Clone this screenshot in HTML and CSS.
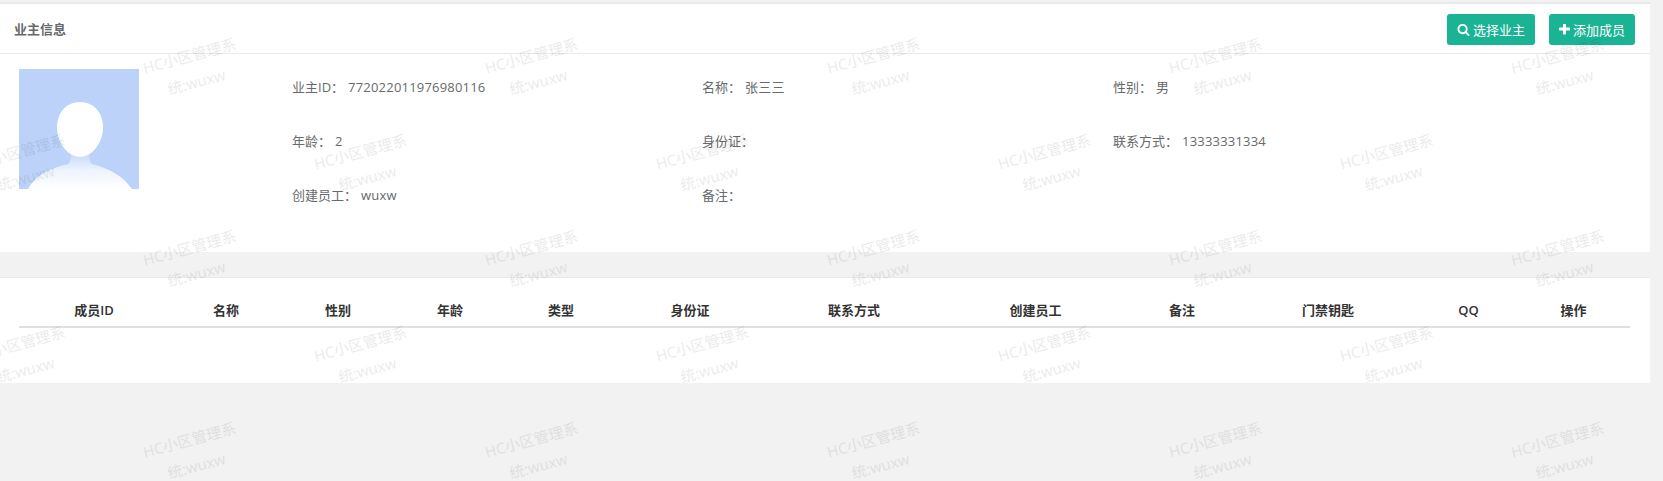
FILE: index.html
```html
<!DOCTYPE html>
<html>

<head>
    <meta charset="UTF-8">
    <title>业主成员</title>
    <link rel="stylesheet" href="styles.css">
</head>

<body>
    <div class="page">
        <div class="ibox ibox-owner">
            <div class="ibox-title">
                <h5>业主信息</h5>
                <div class="ibox-tools">
                    <button class="btn">
                        <svg class="icon" viewBox="0 0 1792 1792"><path d="M1216 832q0-185-131.500-316.500t-316.500-131.500-316.500 131.500-131.500 316.500 131.500 316.500 316.500 131.500 316.500-131.500 131.500-316.500zm512 832q0 52-38 90t-90 38q-54 0-90-38l-343-342q-179 124-399 124-143 0-273.500-55.500t-225-150-150-225-55.500-273.500 55.500-273.500 150-225 225-150 273.500-55.500 273.500 55.500 225 150 150 225 55.500 273.500q0 220-124 399l343 343q37 37 37 90z"/></svg>
                        选择业主
                    </button>
                    <button class="btn">
                        <svg class="icon icon-plus" viewBox="192 192 1408 1408"><path d="M1600 736v192q0 40-28 68t-68 28h-416v416q0 40-28 68t-68 28h-192q-40 0-68-28t-28-68v-416h-416q-40 0-68-28t-28-68v-192q0-40 28-68t68-28h416v-416q0-40 28-68t68-28h192q40 0 68 28t28 68v416h416q40 0 68 28t28 68z"/></svg>
                        添加成员
                    </button>
                </div>
            </div>
            <div class="ibox-content owner">
                <svg class="avatar" viewBox="0 0 120 120">
                    <defs>
                        <linearGradient id="bodyFade" x1="0" y1="0" x2="0" y2="1">
                            <stop offset="0" stop-color="#c4d8f9" />
                            <stop offset="0.5" stop-color="#eef4fd" />
                            <stop offset="1" stop-color="#ffffff" />
                        </linearGradient>
                    </defs>
                    <rect width="120" height="120" fill="#bcd2f8" />
                    <path d="M9 120C15 108 30 99 49 95Q52 93 52 84H70Q70 93 73 95C90 99 105 108 113 120Z" fill="url(#bodyFade)" />
                    <path d="M61 33C75 33 84 44 84 58C84 74 73 88 61 88C49 88 38 74 38 58C38 44 47 33 61 33Z" fill="#ffffff" />
                </svg>
                <div class="owner-info">
                    <div class="field"><label>业主ID：</label><span>772022011976980116</span></div>
                    <div class="field"><label>名称：</label><span>张三三</span></div>
                    <div class="field"><label>性别：</label><span>男</span></div>
                    <div class="field"><label>年龄：</label><span>2</span></div>
                    <div class="field"><label>身份证：</label><span></span></div>
                    <div class="field"><label>联系方式：</label><span>13333331334</span></div>
                    <div class="field"><label>创建员工：</label><span>wuxw</span></div>
                    <div class="field"><label>备注：</label><span></span></div>
                </div>
            </div>
        </div>

        <div class="ibox ibox-members">
            <div class="ibox-content members">
                <table class="table">
                    <thead>
                        <tr>
                            <th class="w150">成员ID</th>
                            <th class="w114">名称</th>
                            <th class="w110">性别</th>
                            <th class="w114">年龄</th>
                            <th class="w108">类型</th>
                            <th class="w150">身份证</th>
                            <th class="w178">联系方式</th>
                            <th class="w185">创建员工</th>
                            <th class="w108">备注</th>
                            <th class="w184">门禁钥匙</th>
                            <th class="w97">QQ</th>
                            <th class="w113">操作</th>
                        </tr>
                    </thead>
                </table>
            </div>
        </div>
    </div>

    <!-- 水印 -->
    <div class="watermark">
        <div class="wm-row">
            <div class="wm"><p>HC小区管理系<br>统:wuxw</p></div><div class="wm"><p>HC小区管理系<br>统:wuxw</p></div><div class="wm"><p>HC小区管理系<br>统:wuxw</p></div><div class="wm"><p>HC小区管理系<br>统:wuxw</p></div><div class="wm"><p>HC小区管理系<br>统:wuxw</p></div>
        </div>
        <div class="wm-row wm-row-shift">
            <div class="wm"><p>HC小区管理系<br>统:wuxw</p></div><div class="wm"><p>HC小区管理系<br>统:wuxw</p></div><div class="wm"><p>HC小区管理系<br>统:wuxw</p></div><div class="wm"><p>HC小区管理系<br>统:wuxw</p></div><div class="wm"><p>HC小区管理系<br>统:wuxw</p></div>
        </div>
        <div class="wm-row">
            <div class="wm"><p>HC小区管理系<br>统:wuxw</p></div><div class="wm"><p>HC小区管理系<br>统:wuxw</p></div><div class="wm"><p>HC小区管理系<br>统:wuxw</p></div><div class="wm"><p>HC小区管理系<br>统:wuxw</p></div><div class="wm"><p>HC小区管理系<br>统:wuxw</p></div>
        </div>
        <div class="wm-row wm-row-shift">
            <div class="wm"><p>HC小区管理系<br>统:wuxw</p></div><div class="wm"><p>HC小区管理系<br>统:wuxw</p></div><div class="wm"><p>HC小区管理系<br>统:wuxw</p></div><div class="wm"><p>HC小区管理系<br>统:wuxw</p></div><div class="wm"><p>HC小区管理系<br>统:wuxw</p></div>
        </div>
        <div class="wm-row">
            <div class="wm"><p>HC小区管理系<br>统:wuxw</p></div><div class="wm"><p>HC小区管理系<br>统:wuxw</p></div><div class="wm"><p>HC小区管理系<br>统:wuxw</p></div><div class="wm"><p>HC小区管理系<br>统:wuxw</p></div><div class="wm"><p>HC小区管理系<br>统:wuxw</p></div>
        </div>
    </div>
</body>

</html>
```

FILE: styles.css
```css
* {
    margin: 0;
    padding: 0;
    box-sizing: border-box;
}

html,
body {
    height: 100%;
    overflow: hidden;
}

body {
    background: #f2f2f2;
    color: #676a6c;
    font-family: "Open Sans", "Noto Sans CJK SC", sans-serif;
    font-size: 13px;
    position: relative;
}

.page {
    width: 1650px;
    padding-top: 2px;
}

.ibox {
    background: #fff;
    border-top: 2px solid #e7eaec;
}

.ibox-owner {
    height: 250px;
}

.ibox-members {
    margin-top: 25px;
    height: 106px;
    border-top-width: 1px;
}

.ibox-title {
    height: 50px;
    border-bottom: 1px solid #e7eaec;
    padding: 10px 15px 0 14px;
    display: flex;
    justify-content: space-between;
}

.ibox-title h5 {
    font-size: 13px;
    font-weight: 600;
    line-height: 30px;
}

.ibox-tools {
    display: flex;
    gap: 14px;
}

.btn {
    height: 31px;
    padding: 0 10px;
    display: flex;
    align-items: center;
    gap: 3px;
    background: #1ab394;
    border: 0;
    border-radius: 3px;
    color: #fff;
    font-family: inherit;
    font-size: 13px;
}

.icon {
    width: 13px;
    height: 13px;
    fill: #fff;
}

.icon-plus {
    width: 11px;
    height: 11px;
}

.owner {
    display: flex;
    padding: 15px 0 0 19px;
}

.avatar {
    width: 120px;
    height: 120px;
    display: block;
}

.owner-info {
    margin-left: 153px;
    display: grid;
    grid-template-columns: 410px 411px 410px;
    grid-auto-rows: 54px;
    align-content: start;
    padding-top: 4px;
    line-height: 28px;
}

.field span {
    margin-left: 4px;
    letter-spacing: 0.2px;
}

.members {
    padding: 15px 20px 0 19px;
}

.table {
    width: 1611px;
    table-layout: fixed;
    border-collapse: collapse;
}

.table th {
    height: 34px;
    color: #333;
    font-size: 13px;
    font-weight: 600;
    text-align: center;
    border-bottom: 2px solid #dde1e5;
}

.w97 { width: 97px; }
.w108 { width: 108px; }
.w110 { width: 110px; }
.w113 { width: 113px; }
.w114 { width: 114px; }
.w150 { width: 150px; }
.w178 { width: 178px; }
.w184 { width: 184px; }
.w185 { width: 185px; }

/* 水印盖在页面上面 */
.watermark {
    position: absolute;
    top: 0;
    left: 0;
    width: 100%;
    height: 100%;
    overflow: hidden;
    pointer-events: none;
    padding-top: 42px;
}

.wm-row {
    display: flex;
    height: 96px;
    margin-left: 22px;
}

.wm-row-shift {
    margin-left: -149px;
}

.wm {
    flex: 0 0 342px;
    text-align: center;
}

.wm p {
    color: #000;
    opacity: 0.08;
    font-size: 15px;
    line-height: 27px;
    white-space: nowrap;
    transform: rotate(-15deg);
}
```
